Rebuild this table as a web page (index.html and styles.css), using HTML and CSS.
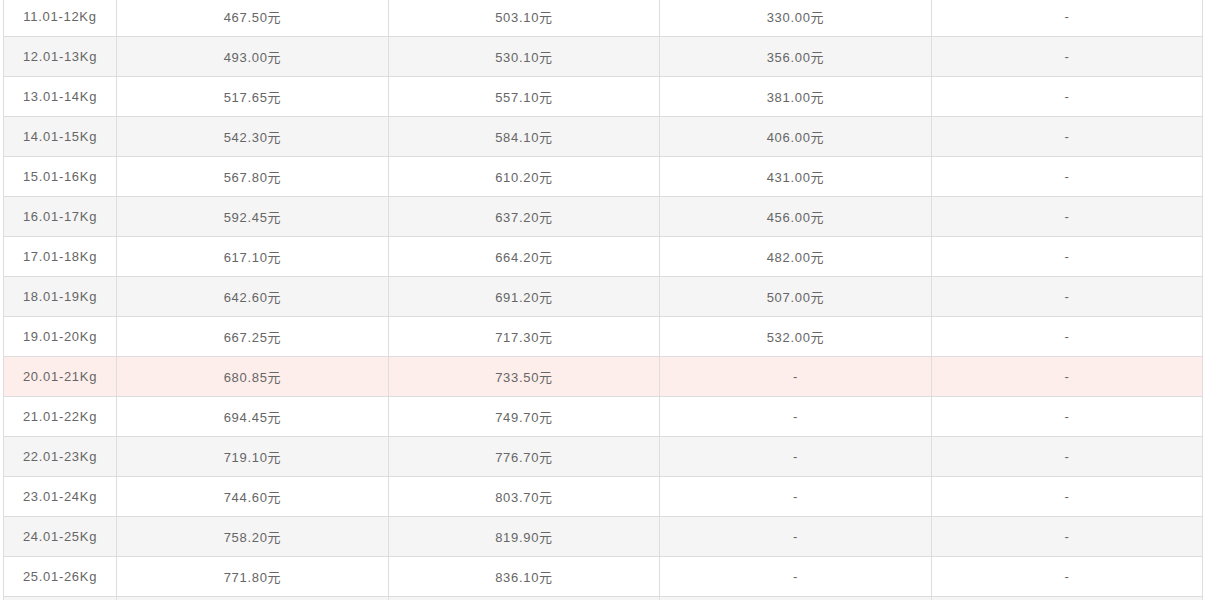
FILE: index.html
```html
<!DOCTYPE html>
<html lang="zh">
<head>
<meta charset="utf-8">
<title>运费表</title>
<link rel="stylesheet" href="styles.css">
</head>
<body>
<table class="price-table">
  <colgroup>
    <col class="c1"><col class="c2"><col class="c3"><col class="c4"><col class="c5">
  </colgroup>
  <tbody>
    <tr><td>11.01-12Kg</td><td>467.50元</td><td>503.10元</td><td>330.00元</td><td>-</td></tr>
    <tr class="alt"><td>12.01-13Kg</td><td>493.00元</td><td>530.10元</td><td>356.00元</td><td>-</td></tr>
    <tr><td>13.01-14Kg</td><td>517.65元</td><td>557.10元</td><td>381.00元</td><td>-</td></tr>
    <tr class="alt"><td>14.01-15Kg</td><td>542.30元</td><td>584.10元</td><td>406.00元</td><td>-</td></tr>
    <tr><td>15.01-16Kg</td><td>567.80元</td><td>610.20元</td><td>431.00元</td><td>-</td></tr>
    <tr class="alt"><td>16.01-17Kg</td><td>592.45元</td><td>637.20元</td><td>456.00元</td><td>-</td></tr>
    <tr><td>17.01-18Kg</td><td>617.10元</td><td>664.20元</td><td>482.00元</td><td>-</td></tr>
    <tr class="alt"><td>18.01-19Kg</td><td>642.60元</td><td>691.20元</td><td>507.00元</td><td>-</td></tr>
    <tr><td>19.01-20Kg</td><td>667.25元</td><td>717.30元</td><td>532.00元</td><td>-</td></tr>
    <tr class="hl"><td>20.01-21Kg</td><td>680.85元</td><td>733.50元</td><td>-</td><td>-</td></tr>
    <tr><td>21.01-22Kg</td><td>694.45元</td><td>749.70元</td><td>-</td><td>-</td></tr>
    <tr class="alt"><td>22.01-23Kg</td><td>719.10元</td><td>776.70元</td><td>-</td><td>-</td></tr>
    <tr><td>23.01-24Kg</td><td>744.60元</td><td>803.70元</td><td>-</td><td>-</td></tr>
    <tr class="alt"><td>24.01-25Kg</td><td>758.20元</td><td>819.90元</td><td>-</td><td>-</td></tr>
    <tr><td>25.01-26Kg</td><td>771.80元</td><td>836.10元</td><td>-</td><td>-</td></tr>
    <tr class="alt"><td>26.01-27Kg</td><td>785.40元</td><td>852.30元</td><td>-</td><td>-</td></tr>
  </tbody>
</table>
</body>
</html>
```
FILE: styles.css
```css
html, body {
  margin: 0;
  padding: 0;
  background: #fff;
}
body {
  font-family: "Liberation Sans", Arial, "Noto Sans CJK SC", sans-serif;
  font-size: 13px;
  color: #666;
}
.price-table {
  border-collapse: collapse;
  table-layout: fixed;
  width: 1200px;
  margin: -4px 0 0 3px;
}
.c1 { width: 113px; }
.c2 { width: 272px; }
.c3 { width: 271px; }
.c4 { width: 272px; }
.c5 { width: 271px; }
.price-table td {
  border: 1px solid #ddd;
  height: 39px;
  padding: 0;
  text-align: center;
  vertical-align: middle;
  letter-spacing: 0.7px;
}
.price-table tr.alt td { background: #f5f5f5; }
.price-table tr.hl td { background: #fdeeeb; }
```
